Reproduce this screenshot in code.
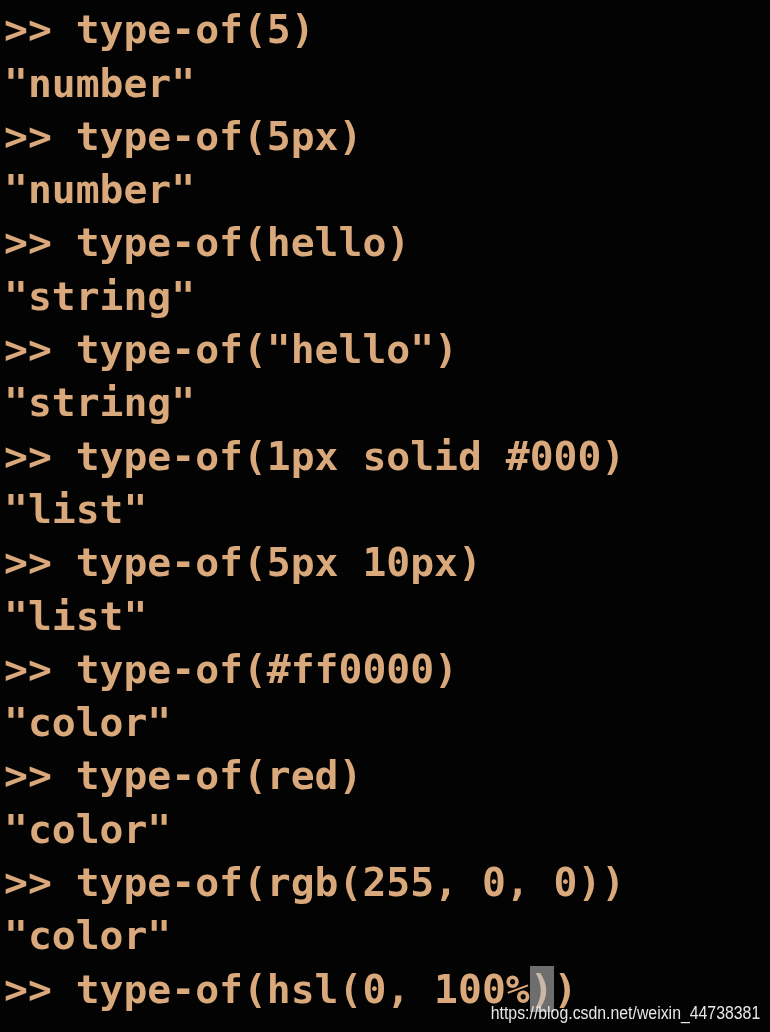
const lines: string[] = [
  '>> @debug type-of(map-get($m, k))',
  '>> type-of(5)',
  '"number"',
  '>> type-of(5px)',
  '"number"',
  '>> type-of(hello)',
  '"string"',
  '>> type-of("hello")',
  '"string"',
  '>> type-of(1px solid #000)',
  '"list"',
  '>> type-of(5px 10px)',
  '"list"',
  '>> type-of(#ff0000)',
  '"color"',
  '>> type-of(red)',
  '"color"',
  '>> type-of(rgb(255, 0, 0))',
  '"color"',
];

export default function App() {
  return (
    <div className="relative h-[1032px] w-[770px] overflow-hidden bg-[#040303]">
      <div
        className="-mt-[50px] whitespace-pre pl-[4px] text-[39.7px] font-bold leading-[53.3px] text-[#d9a87b] blur-[0.6px]"
        style={{ fontFamily: '"DejaVu Sans Mono", monospace' }}
      >
        {lines.map((line, i) => (
          <div key={i}>{line}</div>
        ))}
        <div>
          {'>> type-of(hsl(0, 100%'}
          <span className="bg-[#8a8a8a]/80 text-[#c9b8a6]">)</span>
          {')'}
        </div>
      </div>
      <div
        className="absolute right-[10px] bottom-[10px] origin-right scale-x-[0.88] text-[18px] leading-none text-[#e8e8e8]"
        style={{ fontFamily: '"Liberation Sans", Arial, sans-serif' }}
      >
        https://blog.csdn.net/weixin_44738381
      </div>
    </div>
  );
}
